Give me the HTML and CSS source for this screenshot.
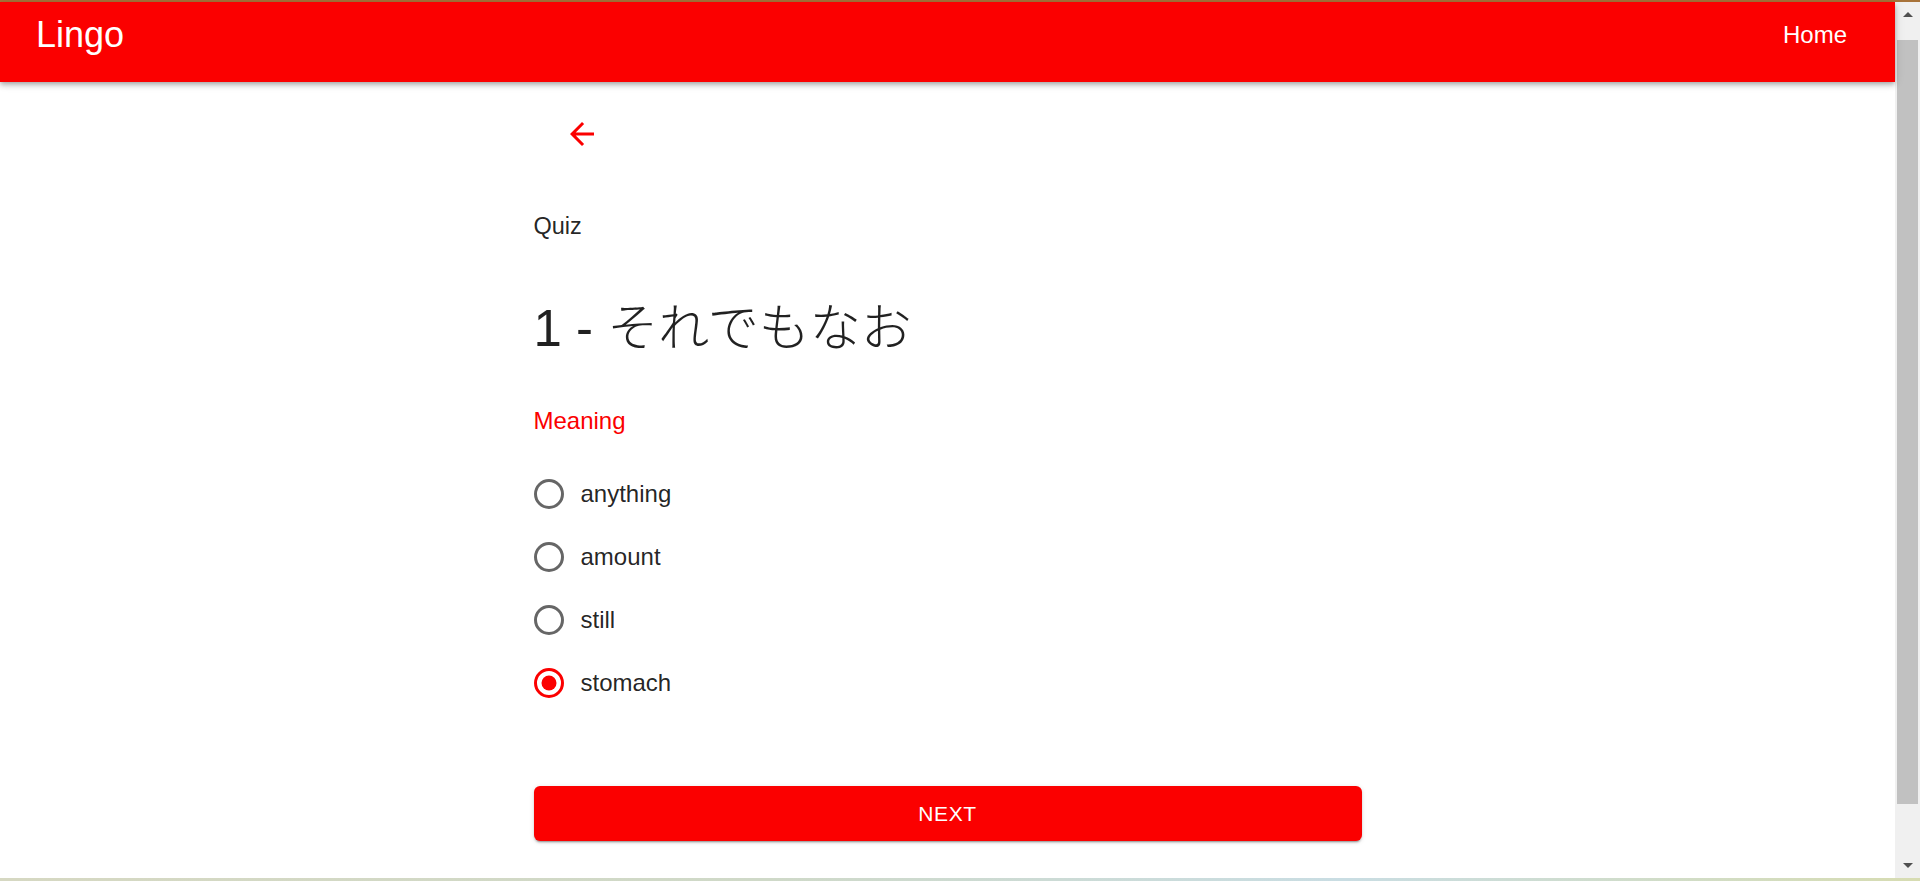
FILE: index.html
```html
<!DOCTYPE html>
<html lang="en">
<head>
<meta charset="utf-8">
<title>Lingo</title>
<link rel="stylesheet" href="styles.css">
</head>
<body>
<div class="screen">
  <div class="top-strip"></div>
  <div class="window">
    <div class="page">
      <header class="appbar">
        <div class="brand">Lingo</div>
        <nav class="nav"><a class="nav-link" href="#">Home</a></nav>
      </header>
      <main class="container">
        <button class="back-btn" type="button" aria-label="Back">
          <svg class="icon" viewBox="0 0 24 24"><path d="M20 11H7.830l5.590-5.590L12 4l-8 8 8 8 1.410-1.410L7.830 13H20v-2z"/></svg>
        </button>
        <div class="subtitle">Quiz</div>
        <h1 class="word">1 - <span class="jp">それでもなお</span></h1>
        <div class="legend">Meaning</div>
        <div class="options">
          <label class="option">
            <span class="radio"><svg class="icon" viewBox="0 0 24 24"><circle cx="12" cy="12" r="9" fill="none" stroke="currentColor" stroke-width="2"/></svg></span>
            <span class="option-label">anything</span>
          </label>
          <label class="option">
            <span class="radio"><svg class="icon" viewBox="0 0 24 24"><circle cx="12" cy="12" r="9" fill="none" stroke="currentColor" stroke-width="2"/></svg></span>
            <span class="option-label">amount</span>
          </label>
          <label class="option">
            <span class="radio"><svg class="icon" viewBox="0 0 24 24"><circle cx="12" cy="12" r="9" fill="none" stroke="currentColor" stroke-width="2"/></svg></span>
            <span class="option-label">still</span>
          </label>
          <label class="option">
            <span class="radio checked"><svg class="icon" viewBox="0 0 24 24"><circle cx="12" cy="12" r="9" fill="none" stroke="currentColor" stroke-width="2"/><circle cx="12" cy="12" r="5" fill="currentColor"/></svg></span>
            <span class="option-label">stomach</span>
          </label>
        </div>
        <button class="next-btn" type="button">Next</button>
      </main>
    </div>
    <div class="scrollbar">
      <div class="sb-btn"><span class="tri-up"></span></div>
      <div class="sb-gap"></div>
      <div class="sb-thumb"></div>
      <div class="sb-track"></div>
      <div class="sb-btn"><span class="tri-down"></span></div>
    </div>
  </div>
  <div class="bottom-strip"></div>
</div>
</body>
</html>
```

FILE: styles.css
```css
html, body {
  margin: 0;
  padding: 0;
  height: 100%;
  overflow: hidden;
  background: #ffffff;
}

.screen {
  display: flex;
  flex-direction: column;
  height: 881px;
  font-family: "Liberation Sans", Arial, "Noto Sans CJK JP", sans-serif;
  color: rgba(0, 0, 0, 0.87);
}

.top-strip {
  height: 2px;
  flex: none;
  background: #a8733a;
}

.bottom-strip {
  height: 3px;
  flex: none;
  background: linear-gradient(90deg, #d6d8c2 0%, #cfd9c8 40%, #c9dde3 70%, #d7dcb2 100%);
}

.window {
  flex: 1;
  display: flex;
  min-height: 0;
}

.page {
  flex: 1;
  min-width: 0;
  background: #ffffff;
}

/* App bar */
.appbar {
  position: relative;
  z-index: 2;
  height: 80px;
  box-sizing: border-box;
  padding: 0 48px 14px 36px;
  display: flex;
  align-items: center;
  justify-content: space-between;
  background: #fb0000;
  color: #ffffff;
  box-shadow: 0 2px 4px -1px rgba(0,0,0,0.2), 0 4px 5px 0 rgba(0,0,0,0.14), 0 1px 10px 0 rgba(0,0,0,0.12);
}

.brand {
  font-size: 36px;
  font-weight: 400;
}

.nav-link {
  color: #ffffff;
  text-decoration: none;
  font-size: 24px;
}

/* Content */
.container {
  width: 828px;
  margin: 0 auto;
  display: flex;
  flex-direction: column;
  align-items: flex-start;
}

.icon {
  width: 36px;
  height: 36px;
  display: block;
  fill: currentColor;
}

.back-btn {
  margin: 34px 0 0 30px;
  padding: 0;
  border: 0;
  background: none;
  color: #fb0000;
  width: 36px;
  height: 36px;
  cursor: pointer;
}

.subtitle {
  margin-top: 58px;
  height: 33px;
  line-height: 33px;
  font-size: 23.5px;
}

.word {
  margin: 51px 0 0;
  height: 60px;
  line-height: 60px;
  font-size: 51px;
  font-weight: 400;
  white-space: nowrap;
}

.jp {
  font-family: "Noto Sans CJK JP", sans-serif;
  font-weight: 300;
}

.legend {
  margin-top: 50px;
  height: 34px;
  line-height: 34px;
  font-size: 24px;
  color: #fb0000;
}

.options {
  margin-top: 24px;
  display: flex;
  flex-direction: column;
}

.option {
  height: 63px;
  display: flex;
  align-items: center;
  margin-left: -16px;
  font-size: 24px;
  cursor: pointer;
}

.radio {
  padding: 13.5px;
  color: rgba(0, 0, 0, 0.6);
}

.radio.checked {
  color: #fb0000;
}

.option-label {
  margin-left: 0;
}

.next-btn {
  margin-top: 72px;
  width: 828px;
  height: 55px;
  border: 0;
  border-radius: 6px;
  background: #fb0000;
  color: #ffffff;
  font-family: "Liberation Sans", Arial, sans-serif;
  font-size: 21px;
  font-weight: 400;
  text-transform: uppercase;
  letter-spacing: 0.6px;
  box-shadow: 0 3px 1px -2px rgba(0,0,0,0.2), 0 2px 2px 0 rgba(0,0,0,0.14), 0 1px 5px 0 rgba(0,0,0,0.12);
  cursor: pointer;
}

/* Scrollbar */
.scrollbar {
  width: 25px;
  flex: none;
  background: #f0f0f0;
  display: flex;
  flex-direction: column;
  align-items: center;
}

.sb-btn {
  height: 25px;
  width: 100%;
  flex: none;
  display: flex;
  align-items: center;
  justify-content: center;
}

.sb-gap {
  height: 13px;
  flex: none;
}

.sb-thumb {
  width: 21px;
  height: 764px;
  flex: none;
  background: #c1c1c1;
}

.sb-track {
  flex: 1;
}

.tri-up, .tri-down {
  width: 0;
  height: 0;
  border-left: 5px solid transparent;
  border-right: 5px solid transparent;
}

.tri-up {
  border-bottom: 5px solid #505050;
}

.tri-down {
  border-top: 5px solid #505050;
}
```
